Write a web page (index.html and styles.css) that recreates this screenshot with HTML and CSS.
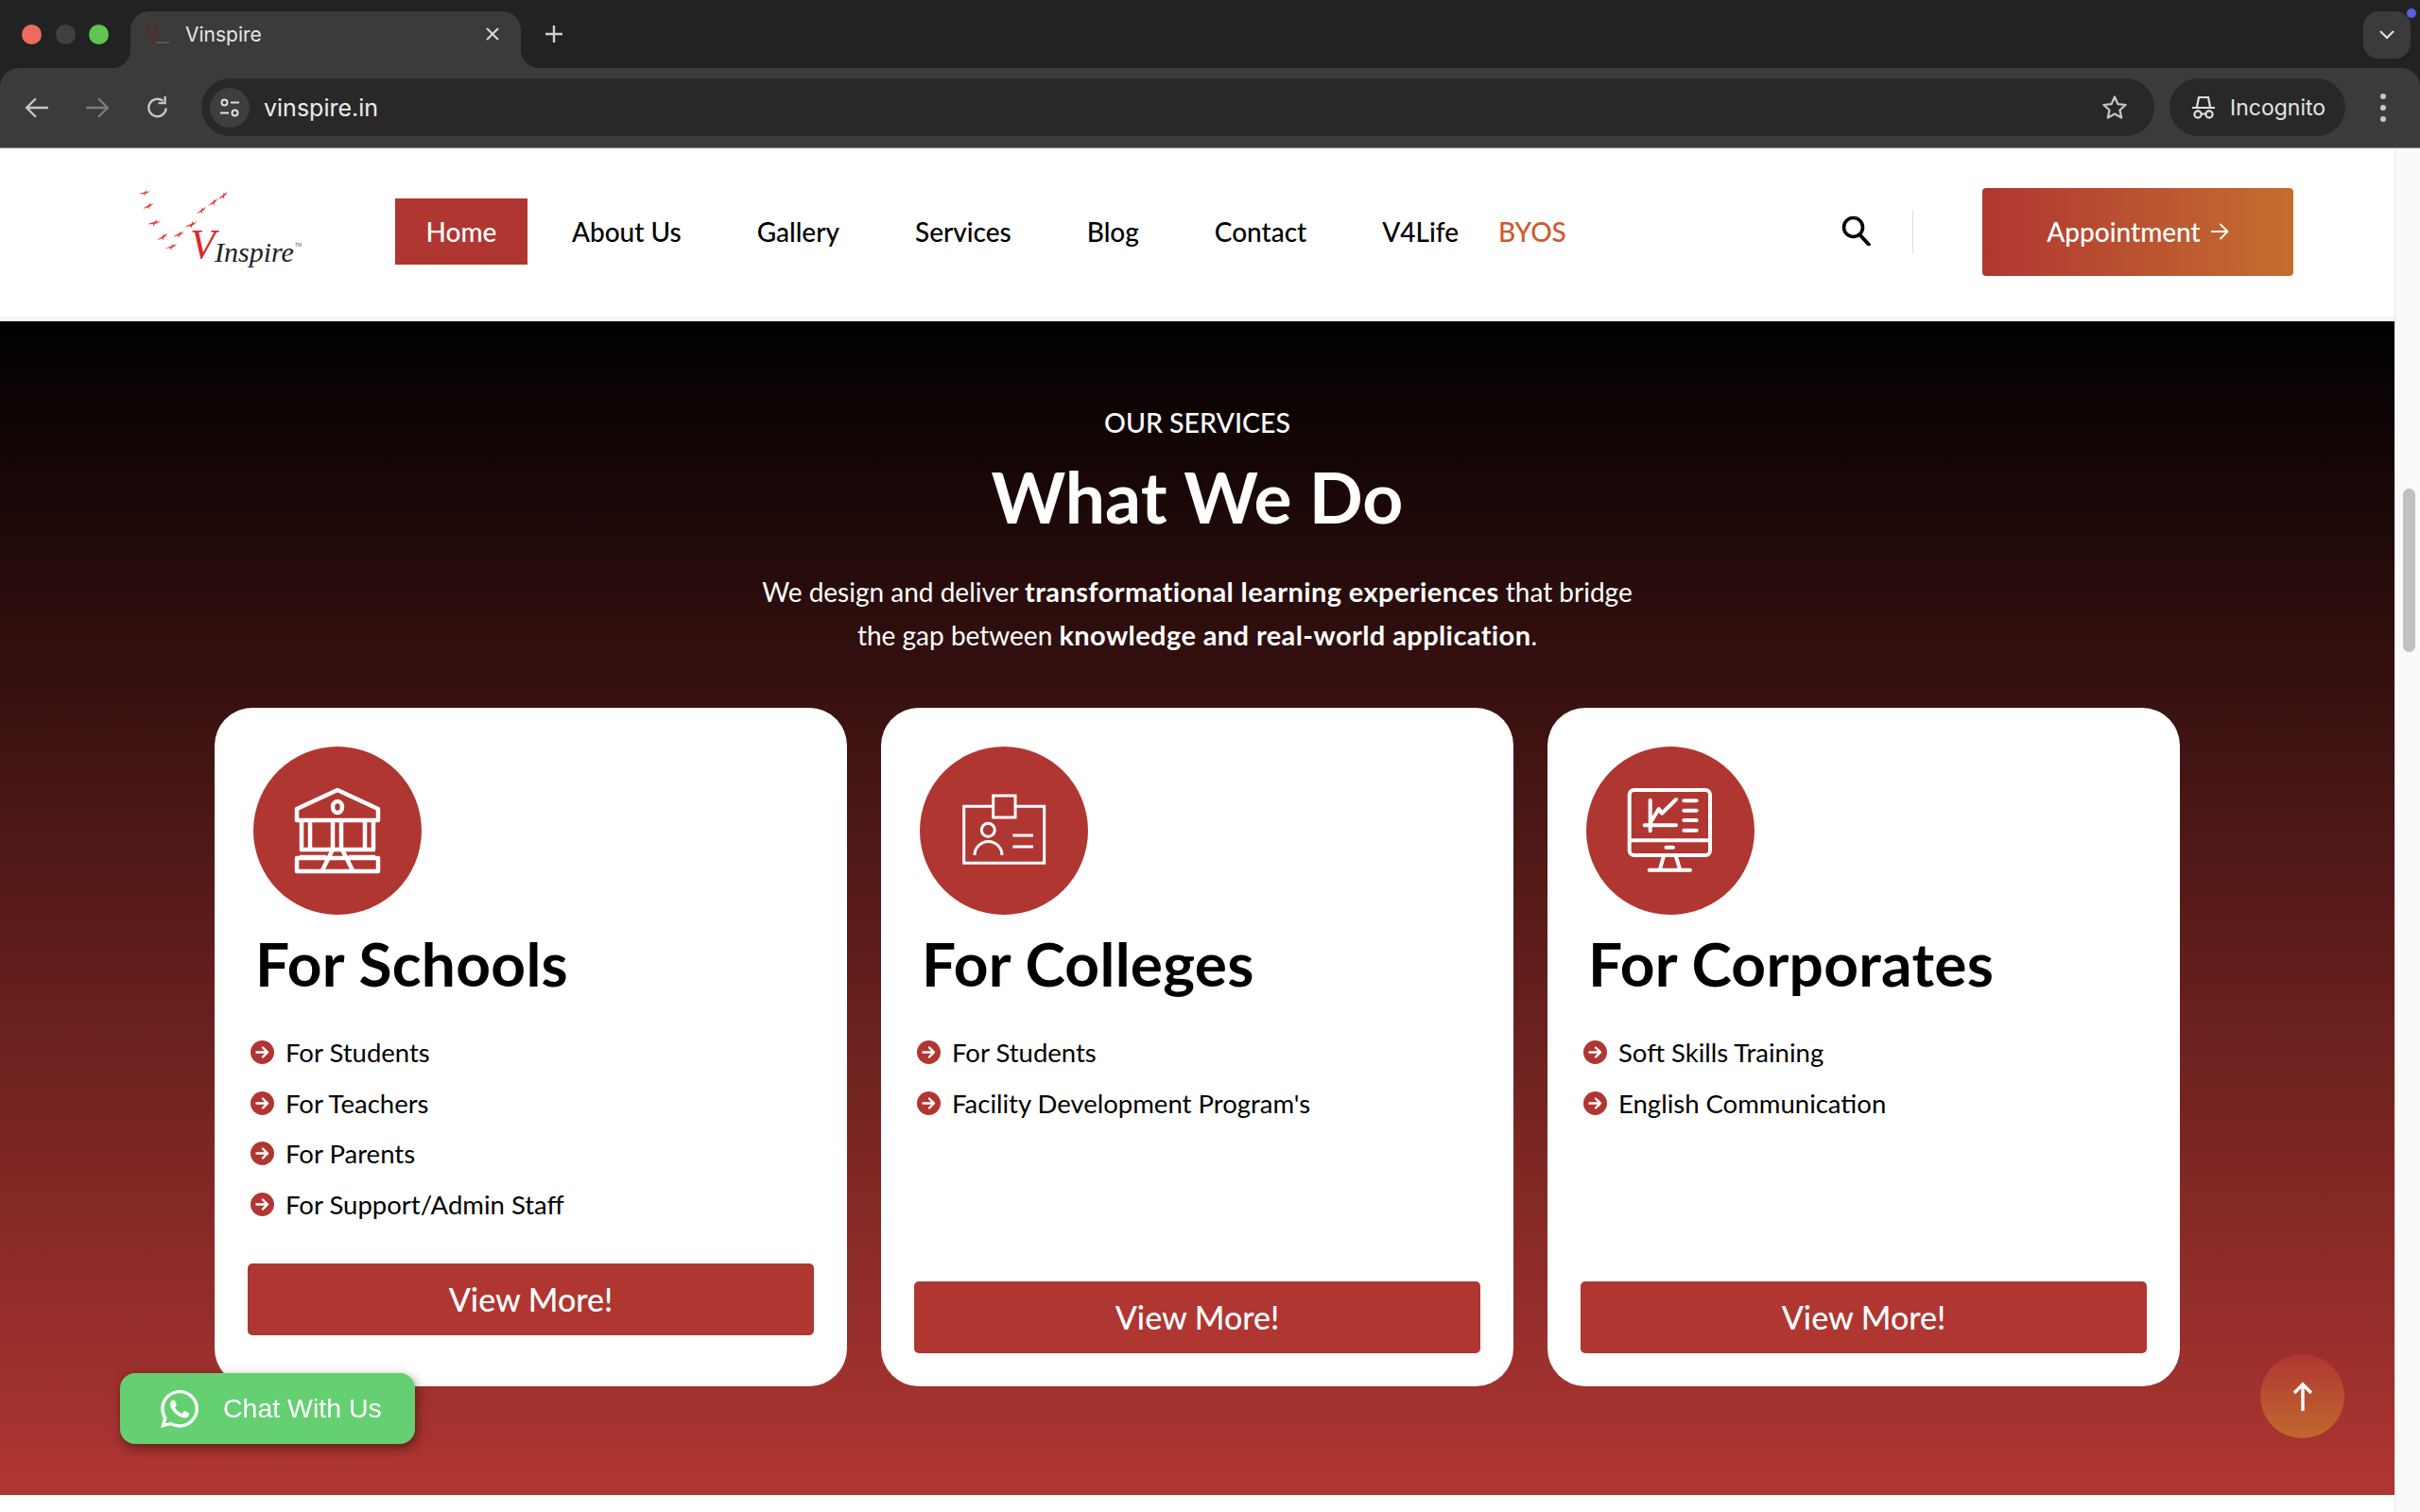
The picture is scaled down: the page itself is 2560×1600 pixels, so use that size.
FILE: index.html
```html
<!DOCTYPE html>
<html lang="en">
<head>
  <meta charset="UTF-8">
  <meta name="viewport" content="width=device-width, initial-scale=1.0">
  <title>Vinspire</title>
  <link rel="stylesheet" href="styles.css">
</head>
<body>
  <svg class="defs" width="0" height="0" aria-hidden="true">
    <symbol id="bullet" viewBox="0 0 25 25">
      <circle cx="12.5" cy="12.5" r="12.5" fill="#b03632"/>
      <path d="M6.5 12.5H18M13 7.5l5 5-5 5" fill="none" stroke="#fff" stroke-width="2.4" stroke-linecap="round" stroke-linejoin="round"/>
    </symbol>
    <symbol id="bird" viewBox="-10 -6 20 12" overflow="visible">
      <path d="M-9 1.5C-5 0-2-.5 1-1L3-4 3.5-1 9-2.5 4 1 1 1.5-1 5-1.5 1.5Z" fill="#e23b3b"/>
    </symbol>
  </svg>

  <!-- browser chrome -->
  <div class="browser">
    <div class="tabstrip">
      <div class="traffic">
        <span class="light light-red"></span>
        <span class="light light-grey"></span>
        <span class="light light-green"></span>
      </div>
      <div class="tab">
        <svg class="favicon" viewBox="0 0 28 26" width="28" height="26">
          <path d="M1 1l8 22M9 23L13 2" fill="none" stroke="#6d2320" stroke-width="1.5"/>
          <path d="M12 22h14" stroke="#555" stroke-width="2"/>
        </svg>
        <span class="tab-title">Vinspire</span>
        <svg class="tab-close" viewBox="0 0 16 16" width="16" height="16">
          <path d="M2 2l12 12M14 2L2 14" stroke="#dcdcdc" stroke-width="2"/>
        </svg>
      </div>
      <svg class="new-tab" viewBox="0 0 20 20" width="20" height="20">
        <path d="M10 1v18M1 10h18" stroke="#d0d0d0" stroke-width="2.4"/>
      </svg>
      <div class="tab-search">
        <svg viewBox="0 0 16 10" width="16" height="10">
          <path d="M1 1l7 7 7-7" fill="none" stroke="#e0e0e0" stroke-width="2.2"/>
        </svg>
        <span class="tab-search-dot"></span>
      </div>
    </div>

    <div class="toolbar">
      <div class="tool-btn">
        <svg viewBox="0 0 24 24" width="26" height="26"><path d="M23 12H3M11 3l-9 9 9 9" fill="none" stroke="#c7c7c7" stroke-width="2.2"/></svg>
      </div>
      <div class="tool-btn">
        <svg viewBox="0 0 24 24" width="26" height="26"><path d="M1 12h20M13 3l9 9-9 9" fill="none" stroke="#7c7c7c" stroke-width="2.2"/></svg>
      </div>
      <div class="tool-btn">
        <svg viewBox="0 0 24 24" width="26" height="26"><path d="M20 12.5A8.5 8.5 0 1 1 17 5.5" fill="none" stroke="#c7c7c7" stroke-width="2.2"/><path d="M19 1v6.5h-6.5" fill="none" stroke="#c7c7c7" stroke-width="2.2"/></svg>
      </div>
      <div class="omnibox">
        <div class="site-info">
          <svg viewBox="0 0 24 24" width="24" height="24">
            <circle cx="6.5" cy="6.5" r="3" fill="none" stroke="#e0e0e0" stroke-width="2"/>
            <path d="M13 6.5h9M2 17.5h9" stroke="#e0e0e0" stroke-width="2"/>
            <circle cx="17.5" cy="17.5" r="3" fill="none" stroke="#e0e0e0" stroke-width="2"/>
          </svg>
        </div>
        <span class="url">vinspire.in</span>
        <svg class="star" viewBox="0 0 28 28" width="28" height="28">
          <path d="M14 2.5l3.4 7.6 8.2.9-6.1 5.5 1.7 8.1L14 20.5l-7.2 4.1 1.7-8.1-6.1-5.5 8.2-.9Z" fill="none" stroke="#c7c7c7" stroke-width="2.2" stroke-linejoin="round"/>
        </svg>
      </div>
      <div class="incognito">
        <svg viewBox="0 0 26 26" width="26" height="26">
          <path d="M6 12l2-10h10l2 10M1 13h24" fill="none" stroke="#e0e0e0" stroke-width="2.2"/>
          <circle cx="7" cy="20" r="3.6" fill="none" stroke="#e0e0e0" stroke-width="2.2"/>
          <circle cx="19" cy="20" r="3.6" fill="none" stroke="#e0e0e0" stroke-width="2.2"/>
          <path d="M10.5 19.5h5" stroke="#e0e0e0" stroke-width="2"/>
        </svg>
        <span>Incognito</span>
      </div>
      <div class="menu-dots"><span></span><span></span><span></span></div>
    </div>
  </div>

  <div class="viewport">
    <div class="page">
      <header class="site-header">
        <svg class="logo" viewBox="0 0 200 110" width="200" height="110" role="img" aria-label="VInspire">
          <use href="#bird" x="-10" y="-6" width="20" height="12" transform="translate(22.700 14) rotate(-4) scale(.7)"/>
          <use href="#bird" x="-10" y="-6" width="20" height="12" transform="translate(27 28) rotate(-18) scale(.7)"/>
          <use href="#bird" x="-10" y="-6" width="20" height="12" transform="translate(33 45.700) rotate(-4) scale(.8)"/>
          <use href="#bird" x="-10" y="-6" width="20" height="12" transform="translate(42 60.700) rotate(-22) scale(.75)"/>
          <use href="#bird" x="-10" y="-6" width="20" height="12" transform="translate(51 71) rotate(-10) scale(.75)"/>
          <use href="#bird" x="-10" y="-6" width="20" height="12" transform="translate(59 58) rotate(-14) scale(.75)"/>
          <use href="#bird" x="-10" y="-6" width="20" height="12" transform="translate(72 47.700) rotate(-14) scale(.8)"/>
          <use href="#bird" x="-10" y="-6" width="20" height="12" transform="translate(83 32.700) rotate(-24) scale(.7)"/>
          <use href="#bird" x="-10" y="-6" width="20" height="12" transform="translate(95.700 24) rotate(-28) scale(.7)"/>
          <use href="#bird" x="-10" y="-6" width="20" height="12" transform="translate(106 17) rotate(-28) scale(.7)"/>
          <text class="logo-v" x="71" y="83">V</text>
          <text class="logo-name" x="97" y="87">Inspire</text>
          <text class="logo-tm" x="182" y="71">TM</text>
        </svg>
        <nav class="main-nav">
          <a class="nav-link active" href="#">Home</a>
          <a class="nav-link" href="#">About Us</a>
          <a class="nav-link" href="#">Gallery</a>
          <a class="nav-link" href="#">Services</a>
          <a class="nav-link" href="#">Blog</a>
          <a class="nav-link" href="#">Contact</a>
          <a class="nav-link" href="#">V4Life</a>
          <a class="nav-link nav-byos" href="#">BYOS</a>
        </nav>
        <div class="header-actions">
          <svg class="search-icon" viewBox="0 0 32 32" width="32" height="32">
            <circle cx="12.5" cy="12.5" r="10" fill="none" stroke="#000" stroke-width="3.6"/>
            <path d="M19 20l11 12" stroke="#000" stroke-width="3.8"/>
          </svg>
          <span class="header-divider"></span>
          <a class="appointment-btn" href="#">
            Appointment
            <svg viewBox="0 0 20 20" width="20" height="20"><path d="M1 10h17M10.5 2l8 8-8 8" fill="none" stroke="#fff" stroke-width="1.8"/></svg>
          </a>
        </div>
      </header>

      <section class="services">
        <p class="eyebrow">OUR SERVICES</p>
        <h1 class="section-title">What We Do</h1>
        <p class="section-text">We design and deliver <strong>transformational learning experiences</strong> that bridge<br>the gap between <strong>knowledge and real-world application</strong>.</p>

        <div class="card-grid">
          <article class="card card-schools">
            <div class="card-icon">
              <svg viewBox="0 0 178 178" width="178" height="178">
                <g fill="none" stroke="#fff" stroke-width="4.500" stroke-linejoin="round" transform="translate(44 44)">
                  <path d="M2 34V22L45 2l43 20v12Z"/>
                  <ellipse cx="45" cy="20" rx="5" ry="6"/>
                  <path d="M7 36v29M16 36v29M40 36v29M49 36v29M74 36v29M83 36v29M5 65h80M5 73h28M57 73h28"/>
                  <path d="M2 74h86v14H2ZM40 65 29 87M50 65l11 22"/>
                </g>
              </svg>
            </div>
            <h2 class="card-title">For Schools</h2>
            <ul class="card-list">
              <li><svg width="25" height="25"><use href="#bullet"/></svg>For Students</li>
              <li><svg width="25" height="25"><use href="#bullet"/></svg>For Teachers</li>
              <li><svg width="25" height="25"><use href="#bullet"/></svg>For Parents</li>
              <li><svg width="25" height="25"><use href="#bullet"/></svg>For Support/Admin Staff</li>
            </ul>
            <a class="card-btn" href="#">View More!</a>
          </article>

          <article class="card">
            <div class="card-icon">
              <svg viewBox="0 0 178 178" width="178" height="178">
                <g fill="none" stroke="#fff" stroke-width="3">
                  <path d="M77.7 63.3H46.7v60h85v-60H101"/>
                  <rect x="77.7" y="52" width="23.3" height="23"/>
                  <circle cx="72.3" cy="88.3" r="7"/>
                  <path d="M58 115a14.500 14.500 0 0 1 29 0M98.300 94H120M98.300 106H120"/>
                </g>
              </svg>
            </div>
            <h2 class="card-title">For Colleges</h2>
            <ul class="card-list">
              <li><svg width="25" height="25"><use href="#bullet"/></svg>For Students</li>
              <li><svg width="25" height="25"><use href="#bullet"/></svg>Facility Development Program's</li>
            </ul>
            <a class="card-btn" href="#">View More!</a>
          </article>

          <article class="card">
            <div class="card-icon">
              <svg viewBox="0 0 178 178" width="178" height="178">
                <g fill="none" stroke="#fff" stroke-width="4" stroke-linecap="round" stroke-linejoin="round">
                  <rect x="45.700" y="46" width="85.300" height="69" rx="5"/>
                  <path d="M46 99.300h85M84.500 106.700h7.500M81.700 116.700l-4 14M95 116.700l4.300 14M66.700 130.700H110"/>
                  <path d="M67.700 56.700v32.600M61.700 83.300H95M68.300 80l8.400-14 3.300 4.700L95 56"/>
                  <path d="M103.300 57.300h13.400M103.300 67.700h13.400M103.300 78h13.400M103.300 88.700h13.400"/>
                </g>
              </svg>
            </div>
            <h2 class="card-title">For Corporates</h2>
            <ul class="card-list">
              <li><svg width="25" height="25"><use href="#bullet"/></svg>Soft Skills Training</li>
              <li><svg width="25" height="25"><use href="#bullet"/></svg>English Communication</li>
            </ul>
            <a class="card-btn" href="#">View More!</a>
          </article>
        </div>
      </section>
    </div>

    <div class="scrollbar"><div class="scrollbar-thumb"></div></div>
  </div>

  <a class="whatsapp-btn" href="#">
    <svg viewBox="0 0 24 24" width="40" height="40"><path fill="#fff" d="M17.472 14.382c-.297-.149-1.758-.867-2.03-.967-.273-.099-.471-.148-.67.15-.197.297-.767.966-.94 1.164-.173.199-.347.223-.644.075-.297-.15-1.255-.463-2.39-1.475-.883-.788-1.48-1.761-1.653-2.059-.173-.297-.018-.458.13-.606.134-.133.298-.347.446-.52.149-.174.198-.298.298-.497.099-.198.05-.371-.025-.52-.075-.149-.669-1.612-.916-2.207-.242-.579-.487-.5-.669-.51-.173-.008-.371-.01-.57-.01-.198 0-.52.074-.792.372-.272.297-1.04 1.016-1.04 2.479 0 1.462 1.065 2.875 1.213 3.074.149.198 2.096 3.2 5.077 4.487.709.306 1.262.489 1.694.625.712.227 1.36.195 1.871.118.571-.085 1.758-.719 2.006-1.413.248-.694.248-1.289.173-1.413-.074-.124-.272-.198-.57-.347m-5.421 7.403h-.004a9.87 9.87 0 01-5.031-1.378l-.361-.214-3.741.982.998-3.648-.235-.374a9.86 9.86 0 01-1.51-5.26c.001-5.45 4.436-9.884 9.888-9.884 2.64 0 5.122 1.03 6.988 2.898a9.825 9.825 0 012.893 6.994c-.003 5.45-4.437 9.884-9.885 9.884m8.413-18.297A11.815 11.815 0 0012.05 0C5.495 0 .16 5.335.157 11.892c0 2.096.547 4.142 1.588 5.945L.057 24l6.305-1.654a11.882 11.882 0 005.683 1.448h.005c6.554 0 11.89-5.335 11.893-11.893a11.821 11.821 0 00-3.48-8.413z"/></svg>
    <span>Chat With Us</span>
  </a>

  <a class="scroll-top" href="#">
    <svg viewBox="0 0 22 32" width="22" height="32"><path d="M11 31V3M2 12l9-9 9 9" fill="none" stroke="#fff" stroke-width="3.4"/></svg>
  </a>
</body>
</html>
```

FILE: styles.css
```css
* {
  margin: 0;
  padding: 0;
  box-sizing: border-box;
}

html, body {
  height: 1600px;
  overflow: hidden;
}

body {
  font-family: Lato, "Noto Sans", sans-serif;
  background-color: #fff;
  color: #000;
}

a {
  text-decoration: none;
  color: inherit;
}

.defs {
  position: absolute;
}

/* browser chrome */
.browser {
  background-color: #212322;
  font-family: Inter, sans-serif;
}

.tabstrip {
  display: flex;
  height: 72px;
}

.traffic {
  display: flex;
  align-items: center;
  gap: 14.5px;
  width: 138px;
  padding-left: 23px;
}

.light {
  width: 21px;
  height: 21px;
  border-radius: 50%;
}

.light-red { background-color: #ee6a5f; }
.light-grey { background-color: #3f4140; }
.light-green { background-color: #61c454; }

.tab {
  position: relative;
  display: flex;
  align-items: center;
  width: 413px;
  height: 60px;
  margin-top: 12px;
  padding: 0 22px 12px 15px;
  background-color: #3b3b3b;
  border-radius: 20px 20px 0 0;
  color: #e6e6e6;
  font-size: 21px;
}

/* curved feet of the active tab */
.tab::before,
.tab::after {
  content: "";
  position: absolute;
  bottom: 0;
  width: 20px;
  height: 20px;
}

.tab::before {
  left: -20px;
  background: radial-gradient(circle at 0 0, transparent 20px, #3b3b3b 20.5px);
}

.tab::after {
  right: -20px;
  background: radial-gradient(circle at 100% 0, transparent 20px, #3b3b3b 20.5px);
}

.favicon {
  flex: none;
  margin-right: 15px;
}

.tab-close {
  margin-left: auto;
}

.new-tab {
  align-self: center;
  margin: 0 0 0 25px;
}

.tab-search {
  position: relative;
  display: flex;
  align-items: center;
  justify-content: center;
  width: 50px;
  height: 50px;
  margin: 12px 10px 0 auto;
  background-color: #3b3b3b;
  border-radius: 16px;
}

.tab-search-dot {
  position: absolute;
  top: -3px;
  right: -6px;
  width: 10px;
  height: 10px;
  border-radius: 50%;
  background-color: #5b5fe0;
}

.toolbar {
  display: flex;
  align-items: center;
  height: 85px;
  padding: 0 0 1px 7px;
  background-color: #3b3b3b;
  border-radius: 20px 20px 0 0;
  border-bottom: 1px solid #8a8a8a;
}

.tool-btn {
  display: flex;
  align-items: center;
  justify-content: center;
  width: 64px;
}

.omnibox {
  display: flex;
  align-items: center;
  flex: 1;
  height: 61px;
  margin-left: 14px;
  padding: 0 28px 0 9px;
  background-color: #282828;
  border-radius: 31px;
}

.site-info {
  display: flex;
  align-items: center;
  justify-content: center;
  width: 42px;
  height: 42px;
  border-radius: 50%;
  background-color: #3e3e3e;
}

.url {
  margin-left: 15px;
  color: #ececec;
  font-size: 25px;
}

.star {
  margin-left: auto;
}

.incognito {
  display: flex;
  align-items: center;
  gap: 15px;
  width: 186px;
  height: 61px;
  margin-left: 16px;
  padding-left: 23px;
  background-color: #282828;
  border-radius: 31px;
  color: #e4e4e4;
  font-size: 23px;
}

.menu-dots {
  display: flex;
  flex-direction: column;
  align-items: center;
  gap: 6px;
  width: 79px;
}

.menu-dots span {
  width: 6px;
  height: 6px;
  border-radius: 50%;
  background-color: #c7c7c7;
}

/* page */
.viewport {
  display: flex;
  height: 1443px;
}

.page {
  flex: 1;
  min-width: 0;
}

.scrollbar {
  flex: none;
  width: 27px;
  padding: 360px 0 0 8px;
  background-color: #fafafa;
  border-left: 1px solid #e9e9e9;
}

.scrollbar-thumb {
  width: 13px;
  height: 173px;
  border-radius: 7px;
  background-color: #c1c1c1;
}

.site-header {
  display: flex;
  align-items: center;
  height: 183px;
  padding: 0 107px 2px 130px;
  border-bottom: 5px solid #f3f4f6;
}

.logo {
  flex: none;
  margin-right: 88px;
}

.logo-v {
  font: italic 400 44px "Liberation Serif", serif;
  fill: #d8282c;
}

.logo-name {
  font: italic 400 30px "Liberation Serif", serif;
  fill: #222;
}

.logo-tm {
  font: 400 5px "Liberation Sans", sans-serif;
  fill: #555;
}

.main-nav {
  display: flex;
  align-items: center;
  font-size: 28px;
  font-weight: 500;
}

.nav-link {
  display: flex;
  align-items: center;
  height: 70px;
  padding: 0 33px;
  margin-right: 14px;
}

.nav-link.active {
  padding: 0 32.500px;
  background-color: #b03632;
  color: #fff;
}

.nav-link:nth-child(7) {
  padding-right: 0;
  margin-right: 9px;
}

.nav-byos {
  padding-right: 0;
  color: #d0592d;
}

.header-actions {
  display: flex;
  align-items: center;
  margin-left: auto;
}

.search-icon {
  flex: none;
  margin-bottom: 3px;
}

.header-divider {
  width: 1px;
  height: 46px;
  margin: 0 73px 0 43px;
  background-color: #ddd;
}

.appointment-btn {
  display: flex;
  align-items: center;
  justify-content: center;
  gap: 10px;
  width: 329px;
  height: 93px;
  background: linear-gradient(90deg, #b03632 0%, #c46e2f 100%);
  border-radius: 4px;
  color: #fff;
  font-size: 28px;
  font-weight: 500;
}

.services {
  height: 1242px;
  padding-top: 87px;
  background: linear-gradient(180deg, #000 0%, #b03632 100%);
  color: #fff;
  text-align: center;
}

.eyebrow {
  font-size: 28.500px;
  font-weight: 500;
  line-height: 40px;
}

.section-title {
  margin-top: 11px;
  font-size: 75px;
  font-weight: 700;
  line-height: 94px;
}

.section-text {
  margin-top: 31px;
  font-size: 28px;
  line-height: 46px;
}

.section-text strong {
  font-size: 29px;
  letter-spacing: 0.4px;
}

.card-grid {
  display: flex;
  gap: 36px;
  width: 2079px;
  margin: 54px auto 0;
  text-align: left;
  color: #000;
}

.card {
  display: flex;
  flex-direction: column;
  flex: 1;
  padding: 41px 35px 35px;
  background-color: #fff;
  border-radius: 40px;
}

.card-icon {
  width: 178px;
  height: 178px;
  margin-left: 6px;
  border-radius: 50%;
  background-color: #b03632;
}

.card-icon svg {
  display: block;
}

.card-title {
  margin: 15px 0 0 8px;
  font-size: 64px;
  font-weight: 700;
  line-height: 74px;
  letter-spacing: 0.3px;
}

.card-list {
  margin: 30px 0 36px 3px;
  list-style: none;
  font-size: 27.500px;
}

.card-list li {
  display: flex;
  align-items: center;
  gap: 12px;
  height: 53.500px;
}

.card-list svg {
  flex: none;
}

.card-btn {
  display: flex;
  align-items: center;
  justify-content: center;
  height: 76px;
  margin-top: auto;
  padding-bottom: 2px;
  background-color: #b03632;
  border-radius: 5px;
  color: #fff;
  font-size: 34px;
  font-weight: 500;
}

.card-schools .card-btn {
  margin-bottom: 19px;
}

/* floating buttons */
.whatsapp-btn {
  position: fixed;
  left: 127px;
  top: 1453px;
  display: flex;
  align-items: center;
  gap: 26px;
  width: 312px;
  height: 75px;
  padding-left: 43px;
  background-color: #65d072;
  border-radius: 16px;
  box-shadow: 2px 4px 12px rgba(0, 0, 0, 0.45);
  color: #fff;
  font-family: "Liberation Sans", Arial, sans-serif;
  font-size: 28.500px;
}

.scroll-top {
  position: fixed;
  left: 2391px;
  top: 1433px;
  display: flex;
  align-items: center;
  justify-content: center;
  width: 89px;
  height: 89px;
  border-radius: 50%;
  background: linear-gradient(180deg, #b03632 0%, #c0692f 100%);
}
```
